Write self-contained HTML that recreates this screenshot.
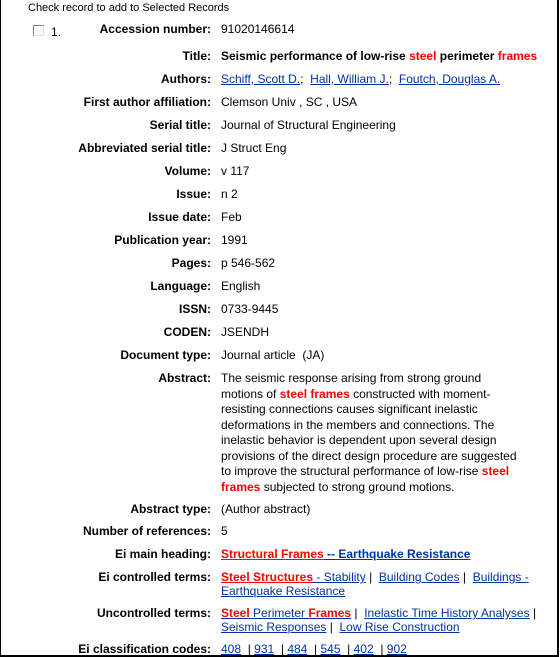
<!DOCTYPE html>
<html><head><style>
body{margin:0;width:560px;height:657px;background:#fff;font-family:"Liberation Sans",Arial,sans-serif;font-size:12px;color:#000;position:relative;overflow:hidden}
.frame{position:absolute;left:0;top:-2px;width:559px;height:659px;border:1px solid #000;border-width:0 2px 2px 1px;box-sizing:border-box}
.r{position:absolute;left:0;width:560px;line-height:14px}
.l{position:absolute;right:349px;font-weight:bold;white-space:nowrap;text-align:right}
.v{position:absolute;left:221px;white-space:nowrap}
a{color:#0033a0;text-decoration:underline}
.h{color:#f00;font-weight:bold}
a.h{color:#f00}
.bl{font-weight:bold}
</style></head><body>
<div class="frame"></div>
<div class="r" style="top:1px"><span style="position:absolute;left:28px;font-size:11px">Check record to add to Selected Records</span></div>
<div style="position:absolute;left:33px;top:25px;width:11px;height:11px;border:1px solid #808080;border-right-color:#ddd;border-bottom-color:#ddd;box-sizing:border-box"></div>
<div class="r" style="top:25px"><span style="position:absolute;left:51px">1.</span></div>
<div class="r" style="top:22px"><span class="l">Accession number:</span><span class="v">91020146614</span></div>
<div class="r" style="top:49px"><span class="l">Title:</span><span class="v bl">Seismic performance of low-rise <span class="h">steel</span> perimeter <span class="h">frames</span></span></div>
<div class="r" style="top:72px"><span class="l">Authors:</span><span class="v"><a>Schiff, Scott D.</a>; &nbsp;<a>Hall, William J.</a>; &nbsp;<a>Foutch, Douglas A.</a></span></div>
<div class="r" style="top:95px"><span class="l">First author affiliation:</span><span class="v">Clemson Univ , SC , USA</span></div>
<div class="r" style="top:118px"><span class="l">Serial title:</span><span class="v">Journal of Structural Engineering</span></div>
<div class="r" style="top:141px"><span class="l">Abbreviated serial title:</span><span class="v">J Struct Eng</span></div>
<div class="r" style="top:164px"><span class="l">Volume:</span><span class="v">v 117</span></div>
<div class="r" style="top:187px"><span class="l">Issue:</span><span class="v">n 2</span></div>
<div class="r" style="top:210px"><span class="l">Issue date:</span><span class="v">Feb</span></div>
<div class="r" style="top:233px"><span class="l">Publication year:</span><span class="v">1991</span></div>
<div class="r" style="top:256px"><span class="l">Pages:</span><span class="v">p 546-562</span></div>
<div class="r" style="top:279px"><span class="l">Language:</span><span class="v">English</span></div>
<div class="r" style="top:302px"><span class="l">ISSN:</span><span class="v">0733-9445</span></div>
<div class="r" style="top:325px"><span class="l">CODEN:</span><span class="v">JSENDH</span></div>
<div class="r" style="top:348px"><span class="l">Document type:</span><span class="v">Journal article &nbsp;(JA)</span></div>
<div class="r" style="top:371px;line-height:15.5px"><span class="l">Abstract:</span><span class="v">The seismic response arising from strong ground<br>motions of <span class="h">steel frames</span> constructed with moment-<br>resisting connections causes significant inelastic<br>deformations in the members and connections. The<br>inelastic behavior is dependent upon several design<br>provisions of the direct design procedure are suggested<br>to improve the structural performance of low-rise <span class="h">steel</span><br><span class="h">frames</span> subjected to strong ground motions.</span></div>
<div class="r" style="top:502px"><span class="l">Abstract type:</span><span class="v">(Author abstract)</span></div>
<div class="r" style="top:524px"><span class="l">Number of references:</span><span class="v">5</span></div>
<div class="r" style="top:547px"><span class="l">Ei main heading:</span><span class="v bl"><a class="h">Structural Frames</a><a> -- Earthquake Resistance</a></span></div>
<div class="r" style="top:570px"><span class="l">Ei controlled terms:</span><span class="v"><a class="h">Steel Structures</a><a> - Stability</a> | &nbsp;<a>Building Codes</a> | &nbsp;<a>Buildings -</a><br><a>Earthquake Resistance</a></span></div>
<div class="r" style="top:606px"><span class="l">Uncontrolled terms:</span><span class="v"><a><span class="h">Steel</span> Perimeter <span class="h">Frames</span></a> | &nbsp;<a>Inelastic Time History Analyses</a> |<br><a>Seismic Responses</a> | &nbsp;<a>Low Rise Construction</a></span></div>
<div class="r" style="top:642px"><span class="l">Ei classification codes:</span><span class="v"><a>408</a> &nbsp;| <a>931</a> &nbsp;| <a>484</a> &nbsp;| <a>545</a> &nbsp;| <a>402</a> &nbsp;| <a>902</a></span></div>
</body></html>
